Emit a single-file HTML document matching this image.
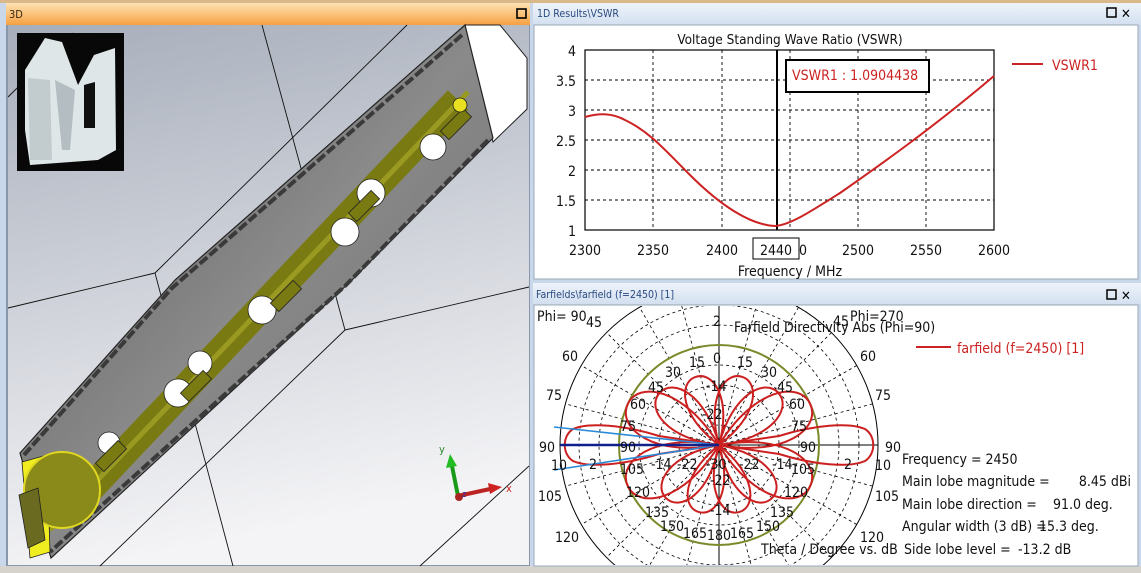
<!DOCTYPE html>
<html><head><meta charset="utf-8"><style>
html,body{margin:0;padding:0;width:1141px;height:573px;overflow:hidden;background:#d4d0c8}
svg{position:absolute;left:0;top:0}
text{font-family:"DejaVu Sans Condensed","Liberation Sans",sans-serif}
</style></head><body>
<svg width="1141" height="573" viewBox="0 0 1141 573" xmlns="http://www.w3.org/2000/svg">
<defs>
<linearGradient id="or" x1="0" y1="0" x2="0" y2="1"><stop offset="0" stop-color="#fde2b4"/><stop offset="0.5" stop-color="#fbc27a"/><stop offset="1" stop-color="#f5a043"/></linearGradient>
<linearGradient id="bl" x1="0" y1="0" x2="0" y2="1"><stop offset="0" stop-color="#eef3fa"/><stop offset="1" stop-color="#d3e0f0"/></linearGradient>
<linearGradient id="vp" x1="0" y1="0" x2="0.2" y2="1"><stop offset="0" stop-color="#a7aebb"/><stop offset="0.55" stop-color="#d2d5dc"/><stop offset="1" stop-color="#f4f4f6"/></linearGradient>
<linearGradient id="bar" x1="0" y1="0" x2="1" y2="1"><stop offset="0" stop-color="#555"/><stop offset="0.5" stop-color="#8a8a8a"/><stop offset="1" stop-color="#666"/></linearGradient>
<path id="pet" vector-effect="non-scaling-stroke" d="M0,0 C-0.38,-0.55 -0.26,-1 0,-1 C0.26,-1 0.38,-0.55 0,0Z"/>
</defs>
<rect x="0" y="0" width="1141" height="573" fill="#c9d7ea"/>
<rect x="0" y="0" width="1141" height="3" fill="#d9b98a"/>
<rect x="0" y="566" width="1141" height="7" fill="#d6d3cc"/>
<!-- left panel -->
<rect x="6" y="3" width="524" height="22" fill="url(#or)"/>
<text x="9" y="18" font-size="11" fill="#3a2a10">3D</text>
<rect x="517" y="9" width="9" height="9" fill="none" stroke="#000" stroke-width="1.6"/>
<rect x="6" y="25" width="524" height="541" fill="#8a97aa"/>
<rect x="8" y="25" width="521" height="540" fill="url(#vp)"/>
<g stroke="#111" stroke-width="0.9" fill="none">
<line x1="262" y1="25" x2="345" y2="330"/>
<line x1="345" y1="330" x2="100" y2="566"/>
<line x1="345" y1="330" x2="529" y2="287"/>
<line x1="407" y1="25" x2="155" y2="273"/>
<line x1="155" y1="273" x2="8" y2="308"/>
<line x1="155" y1="273" x2="233" y2="566"/>
<line x1="73" y1="33" x2="8" y2="97"/>
<line x1="529" y1="466" x2="420" y2="566"/>
</g>
<polygon points="465,25 500,25 527,58 527,109 493,142" fill="#fff" stroke="#222" stroke-width="1"/>
<polygon points="465,25 493,138 349,283 51,558 20,453 175,280" fill="url(#bar)" stroke="#222" stroke-width="1.2"/>
<polyline points="462,35 172,288 24,455" stroke="#3a3a3a" stroke-width="4" fill="none" stroke-dasharray="10 3"/>
<polyline points="488,140 345,286 50,552" stroke="#3a3a3a" stroke-width="4" fill="none" stroke-dasharray="10 3"/>
<polyline points="458,100 68,512" stroke="#7a7a12" stroke-width="28" fill="none"/>
<polyline points="468,92 50,530" stroke="#9a9a22" stroke-width="5" fill="none"/>
<g fill="#fff" stroke="#222" stroke-width="0.8">
<circle cx="433" cy="147" r="13"/><circle cx="371" cy="193" r="14"/><circle cx="345" cy="232" r="14"/><circle cx="262" cy="310" r="14"/><circle cx="200" cy="363" r="12"/><circle cx="178" cy="393" r="14"/><circle cx="109" cy="443" r="11"/>
</g>
<g fill="#7a7a12" stroke="#222" stroke-width="0.8">
<rect x="440" y="118" width="32" height="12" transform="rotate(-45 456 124)"/>
<rect x="348" y="200" width="32" height="12" transform="rotate(-45 364 206)"/>
<rect x="270" y="290" width="32" height="12" transform="rotate(-45 286 296)"/>
<rect x="180" y="380" width="32" height="12" transform="rotate(-45 196 386)"/>
<rect x="95" y="450" width="32" height="12" transform="rotate(-45 111 456)"/>
</g>
<circle cx="460" cy="105" r="7" fill="#e8e020" stroke="#222" stroke-width="0.8"/>
<polygon points="22,462 47,455 50,552 30,558" fill="#f0ee20" stroke="#222" stroke-width="0.8"/>
<circle cx="62" cy="490" r="38" fill="#8a8a1a" stroke="#e0d820" stroke-width="2"/>
<polygon points="19,495 38,488 45,540 28,548" fill="#6a6a20" stroke="#222" stroke-width="0.8"/>
<!-- inset -->
<rect x="17" y="33" width="107" height="138" fill="#080808"/>
<polygon points="25,70 45,38 62,42 78,85 94,55 115,48 116,150 98,160 30,165 25,130" fill="#dfe6e8"/>
<polygon points="28,78 50,80 52,160 30,160" fill="#c2cbce"/>
<polygon points="55,80 75,90 70,150 62,150" fill="#b4bec2"/>
<polygon points="84,85 95,82 95,128 84,128" fill="#101010"/>
<!-- axis -->
<line x1="458" y1="496" x2="452" y2="466" stroke="#1a9a1a" stroke-width="4"/>
<polygon points="446,468 450,454 457,466" fill="#22bb22"/>
<line x1="458" y1="496" x2="490" y2="489" stroke="#b22" stroke-width="4"/>
<polygon points="488,483 502,487 490,494" fill="#c22"/>
<circle cx="459" cy="497" r="4" fill="#a22"/>
<text x="439" y="453" font-size="11" fill="#2a8a2a">y</text>
<text x="506" y="492" font-size="11" fill="#c22">x</text>
<text x="462" y="497" font-size="9" fill="#33b">z</text>

<!-- right top panel -->
<rect x="533" y="3" width="608" height="22" fill="url(#bl)"/>
<text x="537" y="17" font-size="10.5" fill="#2a4a80">1D Results\VSWR</text>
<rect x="1107" y="8" width="9" height="9" fill="none" stroke="#000" stroke-width="1.5"/>
<text x="1121" y="18" font-size="13" fill="#000">✕</text>
<rect x="534" y="25" width="604" height="254" fill="#fff" stroke="#9aa8bb"/>
<text x="790" y="44" font-size="13.5" text-anchor="middle" fill="#111">Voltage Standing Wave Ratio (VSWR)</text>
<g stroke="#000" stroke-width="0.9" stroke-dasharray="3 3">
<line x1="585" y1="80" x2="994" y2="80"/><line x1="585" y1="110" x2="994" y2="110"/><line x1="585" y1="140" x2="994" y2="140"/><line x1="585" y1="170" x2="994" y2="170"/><line x1="585" y1="200" x2="994" y2="200"/>
<line x1="653" y1="50" x2="653" y2="230"/><line x1="722" y1="50" x2="722" y2="230"/><line x1="790" y1="50" x2="790" y2="230"/><line x1="858" y1="50" x2="858" y2="230"/><line x1="926" y1="50" x2="926" y2="230"/>
</g>
<rect x="585" y="50" width="409" height="180" fill="none" stroke="#000" stroke-width="1.2"/>
<g font-size="14" fill="#111" text-anchor="end">
<text x="576" y="56">4</text><text x="576" y="86">3.5</text><text x="576" y="116">3</text><text x="576" y="146">2.5</text><text x="576" y="176">2</text><text x="576" y="206">1.5</text><text x="576" y="236">1</text>
</g>
<g font-size="14" fill="#111" text-anchor="middle">
<text x="585" y="255">2300</text><text x="653" y="255">2350</text><text x="722" y="255">2400</text><text x="803" y="255">0</text><text x="858" y="255">2500</text><text x="926" y="255">2550</text><text x="994" y="255">2600</text>
<text x="790" y="276">Frequency / MHz</text>
</g>
<rect x="753" y="238" width="46" height="21" fill="#fff" stroke="#000"/>
<text x="776" y="255" font-size="14" text-anchor="middle" fill="#111">2440</text>
<line x1="777" y1="50" x2="777" y2="230" stroke="#000" stroke-width="2"/>
<path d="M585,117 C600,113 612,113 625,120 C650,132 665,150 690,175 C720,205 750,225 775,226 C790,225 810,212 840,193 C880,165 930,130 994,76" fill="none" stroke="#cc2222" stroke-width="2"/>
<rect x="786" y="60" width="143" height="32" fill="#fff" stroke="#000" stroke-width="2"/>
<text x="792" y="80" font-size="14" fill="#cc2222">VSWR1 : 1.0904438</text>
<line x1="1012" y1="64" x2="1043" y2="64" stroke="#cc2222" stroke-width="2"/>
<text x="1052" y="70" font-size="14" fill="#cc2222">VSWR1</text>

<!-- right bottom panel -->
<rect x="533" y="283" width="608" height="21" fill="url(#bl)"/>
<text x="536" y="298" font-size="10.5" fill="#2a4a80">Farfields\farfield (f=2450) [1]</text>
<rect x="1107" y="290" width="9" height="9" fill="none" stroke="#000" stroke-width="1.5"/>
<text x="1121" y="300" font-size="13" fill="#000">✕</text>
<rect x="534" y="305" width="604" height="261" fill="#fff" stroke="#9aa8bb"/>
<svg x="535" y="306" width="602" height="259" viewBox="535 306 602 259" overflow="hidden">
<g transform="translate(719 445)">
<g fill="none" stroke="#000" stroke-width="0.8" stroke-dasharray="3 3">
<circle r="20"/><circle r="40"/><circle r="60"/><circle r="80"/><circle r="120"/><circle r="140"/>
<line x1="0" y1="-159" x2="0" y2="159" transform="rotate(15)"/><line x1="0" y1="-159" x2="0" y2="159" transform="rotate(30)"/><line x1="0" y1="-159" x2="0" y2="159" transform="rotate(45)"/><line x1="0" y1="-159" x2="0" y2="159" transform="rotate(60)"/><line x1="0" y1="-159" x2="0" y2="159" transform="rotate(75)"/><line x1="0" y1="-159" x2="0" y2="159" transform="rotate(105)"/><line x1="0" y1="-159" x2="0" y2="159" transform="rotate(120)"/><line x1="0" y1="-159" x2="0" y2="159" transform="rotate(135)"/><line x1="0" y1="-159" x2="0" y2="159" transform="rotate(150)"/><line x1="0" y1="-159" x2="0" y2="159" transform="rotate(165)"/>
</g>
<circle r="159" fill="none" stroke="#000" stroke-width="1"/>
<line x1="-159" y1="0" x2="159" y2="0" stroke="#000" stroke-width="1"/>
<line x1="0" y1="-159" x2="0" y2="159" stroke="#000" stroke-width="1"/>
<circle r="100" fill="none" stroke="#7a8a2a" stroke-width="2"/>
<g fill="none" stroke="#cc2020" stroke-width="2">
<use href="#pet" transform="rotate(19) scale(72)"/><use href="#pet" transform="rotate(-19) scale(72)"/>
<use href="#pet" transform="rotate(49) scale(79)"/><use href="#pet" transform="rotate(-49) scale(79)"/>
<use href="#pet" transform="rotate(66) scale(100)"/><use href="#pet" transform="rotate(-66) scale(100)"/>
<use href="#pet" transform="rotate(114) scale(100)"/><use href="#pet" transform="rotate(-114) scale(100)"/>
<use href="#pet" transform="rotate(135) scale(75)"/><use href="#pet" transform="rotate(-135) scale(75)"/>
<use href="#pet" transform="rotate(163) scale(70)"/><use href="#pet" transform="rotate(-163) scale(70)"/>
<path d="M0,0 L60,-9 C95,-20 130,-23 146,-16 C157,-9 157,9 146,16 C130,23 95,20 60,9 Z"/>
<path d="M0,0 L-60,-9 C-95,-20 -130,-23 -146,-16 C-157,-9 -157,9 -146,16 C-130,23 -95,20 -60,9 Z"/>
</g>
<line x1="0" y1="0" x2="-165" y2="-18" stroke="#2a8ad8" stroke-width="1.6"/>
<line x1="0" y1="0" x2="-165" y2="25" stroke="#2a8ad8" stroke-width="1.6"/>
<line x1="0" y1="0" x2="-159" y2="0" stroke="#10208a" stroke-width="2.5"/>
</g>
</svg>
<g font-size="14" fill="#111">
<text x="537" y="321">Phi= 90</text><text x="586" y="327">45</text><text x="713" y="326">2</text>
<text x="734" y="332">Farfield Directivity Abs (Phi=90)</text>
<text x="833" y="326">45</text><text x="850" y="321">Phi=270</text>
<text x="562" y="361">60</text><text x="860" y="361">60</text>
<text x="689" y="367">15</text><text x="713" y="363">0</text><text x="737" y="367">15</text>
<text x="665" y="377">30</text><text x="761" y="377">30</text>
<text x="648" y="392">45</text><text x="777" y="392">45</text><text x="706" y="391">-14</text>
<text x="546" y="400">75</text><text x="875" y="400">75</text>
<text x="630" y="409">60</text><text x="789" y="409">60</text><text x="702" y="419">-22</text>
<text x="620" y="431">75</text><text x="791" y="431">75</text>
<text x="539" y="452">90</text><text x="620" y="452">90</text><text x="800" y="452">90</text><text x="885" y="452">90</text>
<text x="551" y="470">10</text><text x="589" y="469">2</text><text x="620" y="474">105</text><text x="651" y="469">-14</text><text x="677" y="469">-22</text><text x="706" y="469">-30</text><text x="739" y="469">-22</text><text x="772" y="469">-14</text><text x="791" y="474">105</text><text x="844" y="469">2</text><text x="875" y="470">10</text>
<text x="710" y="485">-22</text>
<text x="538" y="501">105</text><text x="626" y="497">120</text><text x="784" y="497">120</text><text x="875" y="501">105</text>
<text x="645" y="517">135</text><text x="710" y="515">-14</text><text x="770" y="517">135</text>
<text x="660" y="531">150</text><text x="756" y="531">150</text>
<text x="683" y="538">165</text><text x="707" y="540">180</text><text x="730" y="538">165</text>
<text x="555" y="542">120</text><text x="860" y="542">120</text>
<text x="761" y="554">Theta / Degree vs. dB</text>
<text x="902" y="464">Frequency = 2450</text>
<text x="902" y="486">Main lobe magnitude =</text><text x="1131" y="486" text-anchor="end">8.45 dBi</text>
<text x="902" y="509">Main lobe direction =</text><text x="1053" y="509">91.0 deg.</text>
<text x="902" y="531">Angular width (3 dB) =</text><text x="1039" y="531">15.3 deg.</text>
<text x="904" y="554">Side lobe level =</text><text x="1018" y="554">-13.2 dB</text>
</g>
<line x1="916" y1="347" x2="951" y2="347" stroke="#cc2222" stroke-width="2"/>
<text x="957" y="353" font-size="14" fill="#cc2222">farfield (f=2450) [1]</text>
</svg>
</body></html>
